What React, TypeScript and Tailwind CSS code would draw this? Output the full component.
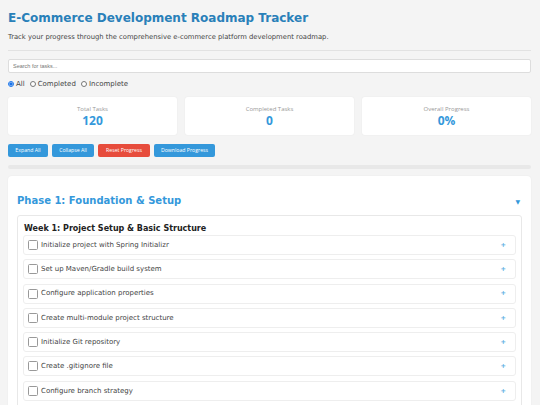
import { useState } from "react";

const tasks = [
  "Initialize project with Spring Initializr",
  "Set up Maven/Gradle build system",
  "Configure application properties",
  "Create multi-module project structure",
  "Initialize Git repository",
  "Create .gitignore file",
  "Configure branch strategy",
  "Set up CI pipeline",
];

const stats = [
  { label: "Total Tasks", value: "120" },
  { label: "Completed Tasks", value: "0" },
  { label: "Overall Progress", value: "0%" },
];

const App = () => {
  const [filter, setFilter] = useState("all");

  return (
    <div className="min-h-screen bg-[#f4f4f4] px-2 pt-[11px] font-['DejaVu_Sans',sans-serif] text-[#333]">
      <div className="w-[523px]">
        <h1 className="text-[12px] leading-[15px] font-bold text-[#2980b9]">
          E-Commerce Development Roadmap Tracker
        </h1>
        <p className="mt-[7px] text-[6.8px] leading-[9px] text-[#444]">
          Track your progress through the comprehensive e-commerce platform development roadmap.
        </p>
        <div className="mt-[8px] h-px bg-[#e2e2e2]" />

        <input
          className="mt-[8px] block h-[14px] w-full rounded-[2px] border border-[#ddd] bg-white px-[4px] font-['Liberation_Sans',sans-serif] text-[5.5px] outline-none placeholder:text-[#777]"
          placeholder="Search for tasks..."
        />

        <div className="mt-[7px] flex h-[8px] items-center text-[7px] leading-[8px] text-[#444]">
          {[
            ["all", "All"],
            ["completed", "Completed"],
            ["incomplete", "Incomplete"],
          ].map(([key, label]) => (
            <label key={key} className="mr-[5px] flex items-center">
              <input
                type="radio"
                name="filter"
                checked={filter === key}
                onChange={() => setFilter(key)}
                className="m-0 mr-[2px] h-[6px] w-[6px] accent-[#1a73e8]"
              />
              {label}
            </label>
          ))}
        </div>

        <div className="mt-[9px] grid grid-cols-3 gap-[8px] font-['Open_Sans',sans-serif]">
          {stats.map((s) => (
            <div
              key={s.label}
              className="flex h-[38px] flex-col items-center justify-center rounded-[3px] bg-white shadow-[0_0_2px_rgba(0,0,0,0.06)]"
            >
              <div className="text-[6px] leading-[8px] text-[#999]">{s.label}</div>
              <div className="mt-[1px] text-[12px] leading-[14px] font-bold text-[#3498db]">{s.value}</div>
            </div>
          ))}
        </div>

        <div className="mt-[9px] flex gap-[4px] font-['Open_Sans',sans-serif] text-[5.2px] text-white">
          <button className="h-[13px] w-[40px] rounded-[2px] bg-[#3498db]">Expand All</button>
          <button className="h-[13px] w-[42px] rounded-[2px] bg-[#3498db]">Collapse All</button>
          <button className="h-[13px] w-[52px] rounded-[2px] bg-[#e74c3c]">Reset Progress</button>
          <button className="h-[13px] w-[61px] rounded-[2px] bg-[#3498db]">Download Progress</button>
        </div>

        <div className="mt-[8px] h-[4px] rounded-full bg-[#e8e8e8]" />

        <div className="mt-[7px] rounded-[4px] bg-white px-[9px] pt-[18px] pb-[10px] shadow-[0_0_2px_rgba(0,0,0,0.06)]">
          <div className="flex items-center justify-between">
            <h2 className="text-[10px] leading-[14px] font-bold text-[#3498db]">
              Phase 1: Foundation &amp; Setup
            </h2>
            <span className="mr-[2px] text-[6px] text-[#3498db]">▼</span>
          </div>

          <div className="mt-[7px] rounded-[3px] border border-[#e8e8e8] px-[5px] pt-[8px] pb-[6px]">
            <h3 className="ml-[1px] text-[8px] leading-[10px] font-bold text-[#222]">
              Week 1: Project Setup &amp; Basic Structure
            </h3>
            <div className="mt-[1px] flex flex-col gap-[4.3px]">
              {tasks.map((t) => (
                <div
                  key={t}
                  className="flex h-[20px] items-center rounded-[3px] border border-[#eee] bg-white pl-[4px] pr-[9px]"
                >
                  <span className="h-[10px] w-[10px] rounded-[1.5px] border border-[#999] bg-white" />
                  <span className="ml-[3px] flex-1 text-[7px] text-[#444]">{t}</span>
                  <span className="text-[6.5px] leading-none font-bold text-[#5dade2]">+</span>
                </div>
              ))}
            </div>
          </div>
        </div>
      </div>
    </div>
  );
};

export default App;
